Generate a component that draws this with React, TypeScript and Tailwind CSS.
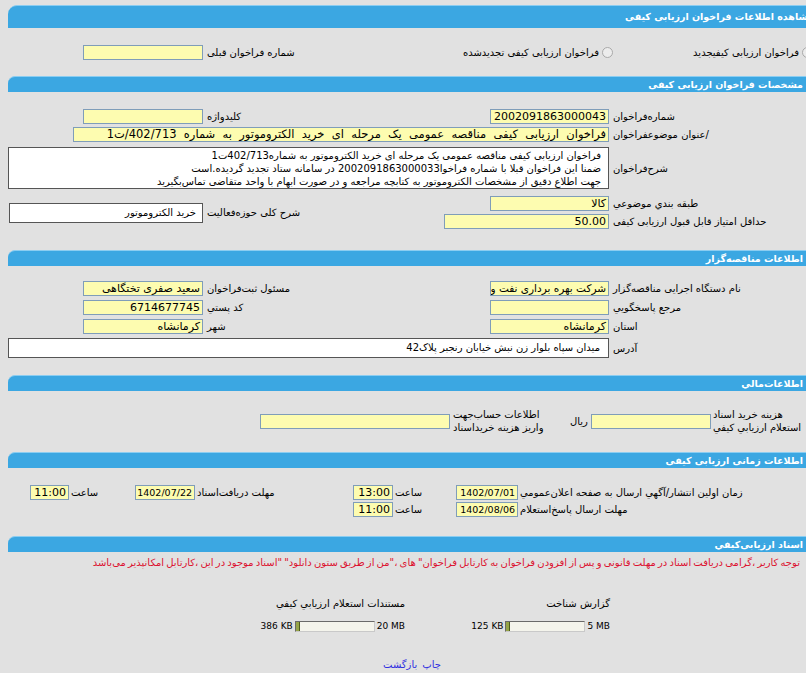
import React from 'react';

function Bar({ title, first }: { title: string; first?: boolean }) {
  return (
    <div
      dir="rtl"
      className={
        first
          ? 'ml-[8px] h-[23px] rounded-tl-[9px] border-t border-[#8bcdf1] bg-[#3ba7e2] pr-[2px] text-[9.5px] font-bold leading-[22px] text-white'
          : 'ml-[8px] h-[16px] rounded-tl-[7px] border-t border-[#8bcdf1] bg-[#3ba7e2] pr-[13px] text-[9.5px] font-bold leading-[15px] text-white'
      }
    >
      {title}
    </div>
  );
}

function Field({
  className = '',
  size = 'text-[11px]',
  children,
}: {
  className?: string;
  size?: string;
  children?: React.ReactNode;
}) {
  return (
    <div
      dir="rtl"
      className={`h-[15px] shrink-0 overflow-hidden whitespace-pre border border-[#7f9db9] bg-[#fdfcb0] pr-[2px] text-right leading-[13px] ${size} ${className}`}
    >
      {children}
    </div>
  );
}

function Radio() {
  return <span className="inline-block h-[11px] w-[11px] shrink-0 rounded-full border border-[#a9a9a9] bg-[#ececec]" />;
}

function Row({
  left,
  leftLabel,
  right,
  rightLabel,
  className = '',
}: {
  left?: React.ReactNode;
  leftLabel?: string;
  right: React.ReactNode;
  rightLabel: string;
  className?: string;
}) {
  return (
    <div className={`flex h-[15px] items-center ${className}`}>
      <div className="flex w-[203px] shrink-0 justify-end">{left}</div>
      <div dir="rtl" className="flex-1 whitespace-nowrap pl-[4px] text-left">
        {leftLabel}
      </div>
      {right}
      <div dir="rtl" className="w-[207px] shrink-0 whitespace-nowrap pl-[4px] text-left">
        {rightLabel}
      </div>
    </div>
  );
}

function Progress({ max, used }: { max: string; used: string }) {
  return (
    <div dir="rtl" className="flex items-center justify-start gap-[2px] whitespace-nowrap text-[9px] leading-[12px]">
      <span dir="ltr">{max}</span>
      <div
        className="flex h-[11px] w-[80px] shrink-0 border border-t-[#6a6a6a] border-l-[#6a6a6a] border-b-[#c9c9c9] border-r-[#c9c9c9] bg-[#f4f4ec]"
        dir="ltr"
      >
        <div className="h-full w-[4px] border-r border-[#4d5b1e] bg-[#96a447]" />
      </div>
      <span dir="ltr">{used}</span>
    </div>
  );
}

export default function App() {
  return (
    <div className="h-[673px] w-full overflow-hidden bg-[#e1e1e1]">
      <div className="w-[816px] text-[10px] leading-[15px] text-black font-['DejaVu_Sans',sans-serif]">
        {/* مشاهده */}
        <div className="pt-[5px]">
          <Bar first title="مشاهده اطلاعات فراخوان ارزیابی کیفی" />
        </div>

        <div className="mt-[17px] flex h-[15px] items-center">
          <div className="flex w-[203px] shrink-0 justify-end">
            <Field className="w-[120px]" />
          </div>
          <div dir="rtl" className="w-[255px] whitespace-nowrap pl-[4px] text-left">
            شماره فراخوان قبلی
          </div>
          <div dir="rtl" className="flex w-[358px] items-center whitespace-nowrap">
            <span className="mr-[3px] flex">
              <Radio />
            </span>
            <span className="mr-[3px] w-[186px]">فراخوان ارزیابی کیفیجدید</span>
            <Radio />
            <span className="mr-[3px]">فراخوان ارزیابی کیفی تجدیدشده</span>
          </div>
        </div>

        {/* مشخصات */}
        <div className="mt-[16px]">
          <Bar title="مشخصات فراخوان ارزیابی کیفی" />
        </div>

        <Row
          className="mt-[17px]"
          left={<Field className="w-[120px]" />}
          leftLabel="کلیدواژه"
          right={<Field className="w-[119px]">2002091863000043</Field>}
          rightLabel="شماره‌فراخوان"
        />

        <div className="mt-[3px] flex h-[15px] items-center">
          <div className="w-[73px] shrink-0" />
          <Field className="w-[536px]" size="text-[11.5px]">
            {'فراخوان  ارزیابی  کیفی  مناقصه  عمومی  یک  مرحله  ای  خرید  الکتروموتور  به  شماره  402/713/ت1'}
          </Field>
          <div dir="rtl" className="w-[207px] shrink-0 whitespace-nowrap pl-[4px] text-left">
            /عنوان  موضوعفراخوان
          </div>
        </div>

        <div className="mt-[5px] flex items-center">
          <div className="w-[8px] shrink-0" />
          <div
            dir="rtl"
            className="h-[42px] w-[601px] shrink-0 overflow-hidden whitespace-nowrap border border-[#555] bg-white pr-[7px] pt-[1px] text-right leading-[13px]"
          >
            <div>فراخوان ارزیابی کیفی مناقصه عمومی یک مرحله ای خرید الکتروموتور به شماره402/713ت1</div>
            <div>ضمنا این فراخوان قبلا با شماره فراخوا2002091863000033 در سامانه ستاد تجدید گردیده.است</div>
            <div>جهت اطلاع دقیق از مشخصات الکتروموتور به کتابچه مراجعه و در صورت ابهام با واحد متقاضی تماس‌بگیرید</div>
          </div>
          <div dir="rtl" className="w-[207px] shrink-0 whitespace-nowrap pl-[4px] text-left">
            شرح‌فراخوان
          </div>
        </div>

        <div className="mt-[7px] flex items-center">
          <div className="flex w-[203px] shrink-0 justify-end">
            <div
              dir="rtl"
              className="h-[20px] w-[194px] overflow-hidden whitespace-nowrap border border-[#555] bg-white pr-[6px] text-right leading-[18px]"
            >
              خرید الکتروموتور
            </div>
          </div>
          <div dir="rtl" className="flex-1 whitespace-nowrap pl-[4px] text-left">
            شرح کلی حوزه‌فعالیت
          </div>
          <div className="flex flex-col gap-[3px]">
            <div className="flex h-[15px] items-center justify-end">
              <Field className="w-[119px]">کالا</Field>
              <div dir="rtl" className="w-[207px] shrink-0 whitespace-nowrap pl-[4px] text-left">
                طبقه بندي موضوعي
              </div>
            </div>
            <div className="flex h-[15px] items-center justify-end">
              <Field className="w-[165px]">50.00</Field>
              <div dir="rtl" className="w-[207px] shrink-0 whitespace-nowrap pl-[4px] text-left">
                حداقل امتیاز قابل قبول ارزیابی کیفی
              </div>
            </div>
          </div>
        </div>

        {/* مناقصه گزار */}
        <div className="mt-[21px]">
          <Bar title="اطلاعات مناقصه‌گزار" />
        </div>

        <div className="mt-[15px] flex flex-col gap-[4px]">
          <Row
            left={<Field className="w-[120px]">سعید صفری تختگاهی</Field>}
            leftLabel="مسئول ثبت‌فراخوان"
            right={
              <Field className="w-[119px]" size="text-[10.5px]">
                شرکت بهره برداری نفت و گاز غرب
              </Field>
            }
            rightLabel="نام دستگاه اجرایی مناقصه‌گزار"
          />
          <Row
            left={<Field className="w-[120px]">6714677745</Field>}
            leftLabel="کد پستي"
            right={<Field className="w-[119px]" />}
            rightLabel="مرجع پاسخگویي"
          />
          <Row
            left={<Field className="w-[120px]">کرمانشاه</Field>}
            leftLabel="شهر"
            right={<Field className="w-[119px]">کرمانشاه</Field>}
            rightLabel="استان"
          />
        </div>

        <div className="mt-[4px] flex items-center">
          <div className="w-[8px] shrink-0" />
          <div
            dir="rtl"
            className="h-[20px] w-[601px] shrink-0 overflow-hidden whitespace-nowrap border border-[#555] bg-white pr-[8px] text-right leading-[18px]"
          >
            میدان سپاه بلوار زن نبش خیابان رنجبر پلاک42
          </div>
          <div dir="rtl" className="w-[207px] shrink-0 whitespace-nowrap pl-[4px] text-left">
            آدرس
          </div>
        </div>

        {/* مالی */}
        <div className="mt-[17px]">
          <Bar title="اطلاعات‌مالي" />
        </div>

        <div className="mt-[17px] flex items-center">
          <div className="w-[260px] shrink-0" />
          <Field className="w-[190px]" />
          <div dir="rtl" className="w-[120px] shrink-0 whitespace-nowrap pl-[3px] text-left leading-[13px]">
            <div>اطلاعات حساب‌جهت</div>
            <div>واریز هزینه خرید‌اسناد</div>
          </div>
          <div dir="rtl" className="w-[21px] shrink-0 text-left">
            ریال
          </div>
          <Field className="w-[120px]" />
          <div dir="rtl" className="whitespace-nowrap pl-[2px] text-left leading-[13px]">
            <div>هزینه خرید اسناد</div>
            <div>استعلام ارزیابي کیفي</div>
          </div>
        </div>

        {/* زمانی */}
        <div className="mt-[18px]">
          <Bar title="اطلاعات زمانی ارزیابی کیفی" />
        </div>

        <div className="mt-[17px] flex h-[15px] items-center">
          <div className="w-[30px] shrink-0" />
          <Field className="w-[39px]">11:00</Field>
          <div dir="rtl" className="w-[66px] shrink-0 pl-[2px] text-left">
            ساعت
          </div>
          <Field className="w-[60px]" size="text-[9.5px]">
            1402/07/22
          </Field>
          <div dir="rtl" className="w-[158px] shrink-0 whitespace-nowrap pl-[2px] text-left">
            مهلت دریافت‌اسناد
          </div>
          <Field className="w-[40px]">13:00</Field>
          <div dir="rtl" className="w-[63px] shrink-0 pl-[2px] text-left">
            ساعت
          </div>
          <Field className="w-[62px]" size="text-[9.5px]">
            1402/07/01
          </Field>
          <div dir="rtl" className="whitespace-nowrap pl-[2px] text-left">
            زمان اولین انتشار/آگهي ارسال به صفحه اعلان‌عمومي
          </div>
        </div>
        <div className="mt-[2px] flex h-[15px] items-center">
          <div className="w-[353px] shrink-0" />
          <Field className="w-[40px]">11:00</Field>
          <div dir="rtl" className="w-[63px] shrink-0 pl-[2px] text-left">
            ساعت
          </div>
          <Field className="w-[62px]" size="text-[9.5px]">
            1402/08/06
          </Field>
          <div dir="rtl" className="whitespace-nowrap pl-[2px] text-left">
            مهلت ارسال پاسخ‌استعلام
          </div>
        </div>

        {/* اسناد */}
        <div className="mt-[19px]">
          <Bar title="اسناد ارزیابی‌کیفي" />
        </div>

        <div
          dir="rtl"
          className="mt-[4px] whitespace-nowrap pr-[16px] text-right leading-[14px] text-[#dc1230] [word-spacing:-1px]"
        >
          توجه کاربر ،گرامی دریافت اسناد در مهلت قانونی و پس از افزودن فراخوان به کارتابل فراخوان" های ،"من از طریق ستون دانلود" "اسناد موجود در این ،کارتابل امکانپذیر می‌باشد
        </div>

        <div className="mt-[26px] flex">
          <div className="w-[263px] shrink-0" />
          <div dir="rtl" className="flex w-[142px] shrink-0 flex-col gap-[9px]">
            <div className="whitespace-nowrap text-right">مستندات استعلام ارزیابي کیفي</div>
            <Progress max="20 MB" used="386 KB" />
          </div>
          <div className="w-[68px] shrink-0" />
          <div dir="rtl" className="flex w-[137px] shrink-0 flex-col gap-[9px]">
            <div className="whitespace-nowrap text-right">گزارش شناخت</div>
            <Progress max="5 MB" used="125 KB" />
          </div>
        </div>

        <div dir="rtl" className="mt-[25px] flex justify-center gap-[5px] pl-[8px] text-[#3030e0]">
          <a href="#">چاپ</a>
          <a href="#">بازگشت</a>
        </div>
      </div>
    </div>
  );
}
